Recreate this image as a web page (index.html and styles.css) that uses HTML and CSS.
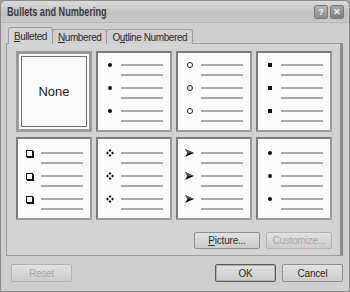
FILE: index.html
```html
<!DOCTYPE html>
<html lang="en">

<head>
    <meta charset="UTF-8">
    <title>Bullets and Numbering</title>
    <link rel="stylesheet" href="styles.css">
</head>

<body>
    <div class="dialog">
        <div class="titlebar">
            <span class="title-text">Bullets and Numbering</span>
            <div class="title-buttons">
                <span class="title-btn">?</span>
                <span class="title-btn close">&#x2715;</span>
            </div>
        </div>

        <div class="dialog-body">
            <div class="tabs">
                <span class="tab active"><u>B</u>ulleted</span>
                <span class="tab"><u>N</u>umbered</span>
                <span class="tab">O<u>u</u>tline Numbered</span>
            </div>

            <div class="tab-panel">
                <div class="bullet-grid">
                    <div class="bullet-cell selected">
                        <span class="none-label">None</span>
                    </div>

                    <div class="bullet-cell">
                        <div class="bullet-item"><span class="mark"><b class="dot"></b></span><div class="lines"><i></i><i></i></div></div>
                        <div class="bullet-item"><span class="mark"><b class="dot"></b></span><div class="lines"><i></i><i></i></div></div>
                        <div class="bullet-item"><span class="mark"><b class="dot"></b></span><div class="lines"><i></i><i></i></div></div>
                    </div>

                    <div class="bullet-cell">
                        <div class="bullet-item"><span class="mark"><b class="ring"></b></span><div class="lines"><i></i><i></i></div></div>
                        <div class="bullet-item"><span class="mark"><b class="ring"></b></span><div class="lines"><i></i><i></i></div></div>
                        <div class="bullet-item"><span class="mark"><b class="ring"></b></span><div class="lines"><i></i><i></i></div></div>
                    </div>

                    <div class="bullet-cell">
                        <div class="bullet-item"><span class="mark"><b class="square"></b></span><div class="lines"><i></i><i></i></div></div>
                        <div class="bullet-item"><span class="mark"><b class="square"></b></span><div class="lines"><i></i><i></i></div></div>
                        <div class="bullet-item"><span class="mark"><b class="square"></b></span><div class="lines"><i></i><i></i></div></div>
                    </div>

                    <div class="bullet-cell row-two">
                        <div class="bullet-item"><span class="mark"><b class="box"></b></span><div class="lines"><i></i><i></i></div></div>
                        <div class="bullet-item"><span class="mark"><b class="box"></b></span><div class="lines"><i></i><i></i></div></div>
                        <div class="bullet-item"><span class="mark"><b class="box"></b></span><div class="lines"><i></i><i></i></div></div>
                    </div>

                    <div class="bullet-cell row-two">
                        <div class="bullet-item"><span class="mark"><svg width="8" height="8" viewBox="0 0 8 8"><path d="M4 0L5.5 1.5L4 3L2.5 1.5ZM4 5L5.5 6.5L4 8L2.5 6.5ZM1.5 2.5L3 4L1.5 5.5L0 4ZM6.5 2.5L8 4L6.5 5.5L5 4Z" fill="#111"/></svg></span><div class="lines"><i></i><i></i></div></div>
                        <div class="bullet-item"><span class="mark"><svg width="8" height="8" viewBox="0 0 8 8"><path d="M4 0L5.5 1.5L4 3L2.5 1.5ZM4 5L5.5 6.5L4 8L2.5 6.5ZM1.5 2.5L3 4L1.5 5.5L0 4ZM6.5 2.5L8 4L6.5 5.5L5 4Z" fill="#111"/></svg></span><div class="lines"><i></i><i></i></div></div>
                        <div class="bullet-item"><span class="mark"><svg width="8" height="8" viewBox="0 0 8 8"><path d="M4 0L5.5 1.5L4 3L2.5 1.5ZM4 5L5.5 6.5L4 8L2.5 6.5ZM1.5 2.5L3 4L1.5 5.5L0 4ZM6.5 2.5L8 4L6.5 5.5L5 4Z" fill="#111"/></svg></span><div class="lines"><i></i><i></i></div></div>
                    </div>

                    <div class="bullet-cell row-two">
                        <div class="bullet-item"><span class="mark"><svg width="9" height="8" viewBox="0 0 9 8"><path d="M0 0L9 4L0 8L2.5 4Z" fill="#111"/><path d="M0 0L9 4L2.5 4Z" fill="#555"/></svg></span><div class="lines"><i></i><i></i></div></div>
                        <div class="bullet-item"><span class="mark"><svg width="9" height="8" viewBox="0 0 9 8"><path d="M0 0L9 4L0 8L2.5 4Z" fill="#111"/><path d="M0 0L9 4L2.5 4Z" fill="#555"/></svg></span><div class="lines"><i></i><i></i></div></div>
                        <div class="bullet-item"><span class="mark"><svg width="9" height="8" viewBox="0 0 9 8"><path d="M0 0L9 4L0 8L2.5 4Z" fill="#111"/><path d="M0 0L9 4L2.5 4Z" fill="#555"/></svg></span><div class="lines"><i></i><i></i></div></div>
                    </div>

                    <div class="bullet-cell row-two">
                        <div class="bullet-item"><span class="mark"><b class="dot"></b></span><div class="lines"><i></i><i></i></div></div>
                        <div class="bullet-item"><span class="mark"><b class="dot"></b></span><div class="lines"><i></i><i></i></div></div>
                        <div class="bullet-item"><span class="mark"><b class="dot"></b></span><div class="lines"><i></i><i></i></div></div>
                    </div>
                </div>

                <div class="panel-actions">
                    <button class="dlg-button"><u>P</u>icture...</button>
                    <button class="dlg-button" disabled>Customize...</button>
                </div>
            </div>

            <div class="dialog-footer">
                <button class="dlg-button" disabled>Reset</button>
                <div class="footer-right">
                    <button class="dlg-button default">OK</button>
                    <button class="dlg-button">Cancel</button>
                </div>
            </div>
        </div>
    </div>
</body>

</html>
```

FILE: styles.css
```css
:root {
    --face: #cecece;
    --panel: #d3d3d3;
    --line: #a9a9a9;
    --text: #2c2c2c;
}

body {
    margin: 0;
    background: #9a9a9a;
    font-family: 'Liberation Sans', Arial, sans-serif;
    font-size: 10px;
    color: var(--text);
}

.dialog {
    width: 350px;
    height: 292px;
    box-sizing: border-box;
    background: var(--face);
    border: 1px solid #8a8a8a;
    border-radius: 6px 6px 0 0;
    overflow: hidden;
}

.titlebar {
    height: 21px;
    display: flex;
    align-items: center;
    justify-content: space-between;
    padding: 0 5px 0 6px;
    background: linear-gradient(#dadada, #c2c2c2 60%, #c8c8c8);
    border-bottom: 1px solid #b4b4b4;
}

.title-text {
    display: inline-block;
    font-size: 13px;
    font-weight: bold;
    color: #3a3a3a;
    transform: scaleX(0.7);
    transform-origin: left center;
}

.title-buttons {
    display: flex;
    gap: 2px;
}

.title-btn {
    width: 12px;
    height: 12px;
    line-height: 12px;
    text-align: center;
    font-size: 9px;
    font-weight: bold;
    color: #f4f4f4;
    background: linear-gradient(#b4b4b4, #8a8a8a);
    border: 1px solid #7a7a7a;
    border-radius: 2px;
}

.title-btn.close {
    background: linear-gradient(#a8a8a8, #7c7c7c);
}

.dialog-body {
    padding: 4px 6px 0 5px;
}

.tabs {
    display: flex;
    height: 17px;
    margin-left: 2px;
    margin-bottom: -1px;
    position: relative;
}

.tab {
    padding: 0 5px;
    line-height: 16px;
    margin-top: 2px;
    letter-spacing: -0.4px;
    background: #d0d0d0;
    border: 1px solid #9c9c9c;
    border-bottom: none;
    border-radius: 3px 3px 0 0;
    margin-right: -1px;
}

.tab.active {
    margin-top: 0;
    line-height: 18px;
    background: var(--panel);
    z-index: 1;
}

.tab-panel {
    height: 213px;
    box-sizing: border-box;
    background: var(--panel);
    border: 1px solid #9c9c9c;
    border-right: 3px solid #8c8c8c;
    padding: 7px 5px 0 9px;
}

.bullet-grid {
    display: grid;
    grid-template-columns: repeat(4, 76px);
    grid-template-rows: 81px 83px;
    gap: 5px 4px;
}

.bullet-cell {
    background: #fbfbfb;
    border: 2px solid;
    border-color: #7c7c7c #9a9a9a #9a9a9a #7c7c7c;
    box-sizing: border-box;
    padding: 8px 0 0 7px;
}

.bullet-cell.row-two {
    padding-top: 10px;
}

.bullet-cell.selected {
    display: flex;
    align-items: center;
    justify-content: center;
    padding: 0;
    border: 3px solid #9a9a9a;
    outline: 1px solid #6e6e6e;
    outline-offset: -6px;
}

.none-label {
    font-size: 13px;
    color: #222;
}

.bullet-item {
    display: flex;
    height: 23px;
}

.mark {
    width: 9px;
    height: 8px;
    display: flex;
    align-items: center;
    justify-content: center;
}

.dot {
    width: 4px;
    height: 4px;
    border-radius: 50%;
    background: #111;
}

.ring {
    width: 4px;
    height: 4px;
    border: 1px solid #222;
    border-radius: 50%;
}

.square {
    width: 4px;
    height: 4px;
    background: #111;
}

.box {
    width: 5px;
    height: 5px;
    border: 1px solid #111;
    box-shadow: 1px 1px 0 #111;
}

.lines {
    display: flex;
    flex-direction: column;
    gap: 8px;
    padding-top: 3px;
    margin-left: 7px;
}

.lines i {
    display: block;
    width: 42px;
    height: 2px;
    background: var(--line);
}

.panel-actions {
    display: flex;
    justify-content: flex-end;
    gap: 6px;
    margin-top: 12px;
    padding-right: 3px;
}

.dlg-button {
    width: 66px;
    height: 17px;
    padding: 0;
    font-family: inherit;
    font-size: 10px;
    letter-spacing: -0.2px;
    color: var(--text);
    background: linear-gradient(#e2e2e2, #cbcbcb);
    border: 1px solid #8e8e8e;
    border-radius: 2px;
}

.dlg-button:disabled {
    color: #a6a6a6;
    border-color: #b2b2b2;
}

.dlg-button.default {
    border-color: #5c5c5c;
    box-shadow: inset 0 0 0 1px #b0b0b0;
}

.dialog-footer {
    display: flex;
    justify-content: space-between;
    align-items: center;
    margin-top: 8px;
    padding-left: 5px;
}

.dialog-footer .dlg-button {
    width: 61px;
    height: 18px;
}

.footer-right {
    display: flex;
    gap: 6px;
}
```
